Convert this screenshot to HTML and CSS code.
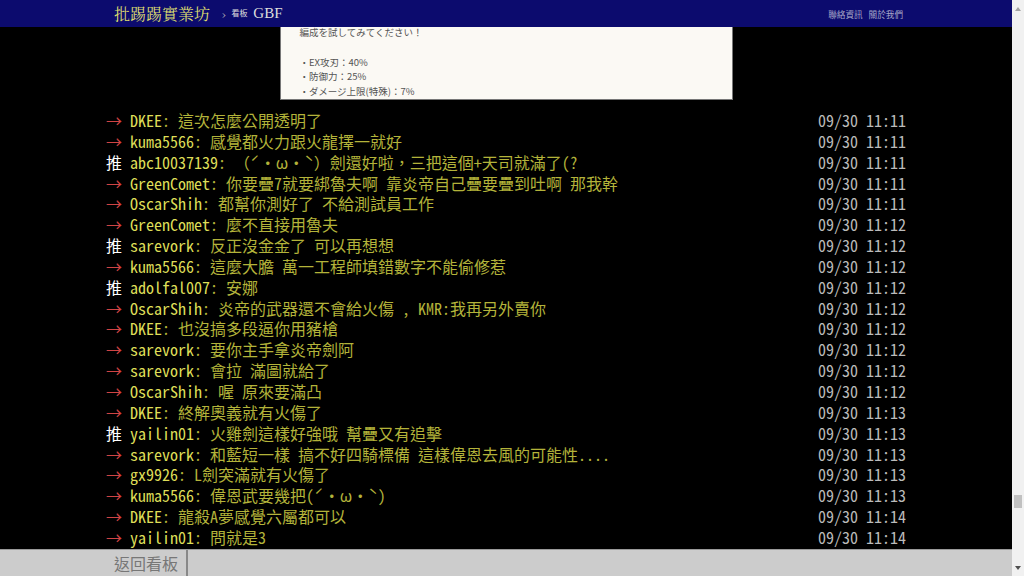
FILE: index.html
```html
<!DOCTYPE html>
<html>
<head>
  <meta charset="utf-8">
  <link rel="stylesheet" href="styles.css">
</head>
<body>
  <div class="page">
    <div id="topbar">
      <div class="bar-inner">
        <a class="logo">批踢踢實業坊</a>
        <span class="sep">&rsaquo;</span>
        <a class="board"><span class="board-label">看板</span> GBF</a>
        <div class="right-links">
          <a>聯絡資訊</a>
          <a>關於我們</a>
        </div>
      </div>
    </div>

    <div id="main">
      <div class="main-inner">
        <div class="richcontent">
          <div class="pic">
            <p>編成を試してみてください！</p>
            <p>&nbsp;</p>
            <p>・EX攻刃：40%</p>
            <p>・防御力：25%</p>
            <p>・ダメージ上限(特殊)：7%</p>
          </div>
        </div>

        <div class="push"><span class="push-tag arrow">→ </span><span class="push-userid">DKEE</span><span class="push-content">: 這次怎麼公開透明了</span><span class="push-ipdatetime">09/30 11:11</span></div>
        <div class="push"><span class="push-tag arrow">→ </span><span class="push-userid">kuma5566</span><span class="push-content">: 感覺都火力跟火龍擇一就好</span><span class="push-ipdatetime">09/30 11:11</span></div>
        <div class="push"><span class="push-tag">推 </span><span class="push-userid">abc10037139</span><span class="push-content">: （ˊ・ω・ˋ）劍還好啦，三把這個+天司就滿了(?</span><span class="push-ipdatetime">09/30 11:11</span></div>
        <div class="push"><span class="push-tag arrow">→ </span><span class="push-userid">GreenComet</span><span class="push-content">: 你要疊7就要綁魯夫啊 靠炎帝自己疊要疊到吐啊 那我幹</span><span class="push-ipdatetime">09/30 11:11</span></div>
        <div class="push"><span class="push-tag arrow">→ </span><span class="push-userid">OscarShih</span><span class="push-content">: 都幫你測好了 不給測試員工作</span><span class="push-ipdatetime">09/30 11:11</span></div>
        <div class="push"><span class="push-tag arrow">→ </span><span class="push-userid">GreenComet</span><span class="push-content">: 麼不直接用魯夫</span><span class="push-ipdatetime">09/30 11:12</span></div>
        <div class="push"><span class="push-tag">推 </span><span class="push-userid">sarevork</span><span class="push-content">: 反正沒金金了 可以再想想</span><span class="push-ipdatetime">09/30 11:12</span></div>
        <div class="push"><span class="push-tag arrow">→ </span><span class="push-userid">kuma5566</span><span class="push-content">: 這麼大膽 萬一工程師填錯數字不能偷修惹</span><span class="push-ipdatetime">09/30 11:12</span></div>
        <div class="push"><span class="push-tag">推 </span><span class="push-userid">adolfal007</span><span class="push-content">: 安娜</span><span class="push-ipdatetime">09/30 11:12</span></div>
        <div class="push"><span class="push-tag arrow">→ </span><span class="push-userid">OscarShih</span><span class="push-content">: 炎帝的武器還不會給火傷 , KMR:我再另外賣你</span><span class="push-ipdatetime">09/30 11:12</span></div>
        <div class="push"><span class="push-tag arrow">→ </span><span class="push-userid">DKEE</span><span class="push-content">: 也沒搞多段逼你用豬槍</span><span class="push-ipdatetime">09/30 11:12</span></div>
        <div class="push"><span class="push-tag arrow">→ </span><span class="push-userid">sarevork</span><span class="push-content">: 要你主手拿炎帝劍阿</span><span class="push-ipdatetime">09/30 11:12</span></div>
        <div class="push"><span class="push-tag arrow">→ </span><span class="push-userid">sarevork</span><span class="push-content">: 會拉 滿圖就給了</span><span class="push-ipdatetime">09/30 11:12</span></div>
        <div class="push"><span class="push-tag arrow">→ </span><span class="push-userid">OscarShih</span><span class="push-content">: 喔 原來要滿凸</span><span class="push-ipdatetime">09/30 11:12</span></div>
        <div class="push"><span class="push-tag arrow">→ </span><span class="push-userid">DKEE</span><span class="push-content">: 終解奧義就有火傷了</span><span class="push-ipdatetime">09/30 11:13</span></div>
        <div class="push"><span class="push-tag">推 </span><span class="push-userid">yailin01</span><span class="push-content">: 火雞劍這樣好強哦 幫疊又有追擊</span><span class="push-ipdatetime">09/30 11:13</span></div>
        <div class="push"><span class="push-tag arrow">→ </span><span class="push-userid">sarevork</span><span class="push-content">: 和藍短一樣 搞不好四騎標備 這樣偉恩去風的可能性....</span><span class="push-ipdatetime">09/30 11:13</span></div>
        <div class="push"><span class="push-tag arrow">→ </span><span class="push-userid">gx9926</span><span class="push-content">: L劍突滿就有火傷了</span><span class="push-ipdatetime">09/30 11:13</span></div>
        <div class="push"><span class="push-tag arrow">→ </span><span class="push-userid">kuma5566</span><span class="push-content">: 偉恩武要幾把(ˊ・ω・ˋ)</span><span class="push-ipdatetime">09/30 11:13</span></div>
        <div class="push"><span class="push-tag arrow">→ </span><span class="push-userid">DKEE</span><span class="push-content">: 龍殺A夢感覺六屬都可以</span><span class="push-ipdatetime">09/30 11:14</span></div>
        <div class="push"><span class="push-tag arrow">→ </span><span class="push-userid">yailin01</span><span class="push-content">: 問就是3</span><span class="push-ipdatetime">09/30 11:14</span></div>
      </div>
    </div>

    <div id="navigation">
      <div class="bar-inner">
        <a class="back-board">返回看板</a>
      </div>
    </div>
  </div>

  <div class="scrollbar">
    <div class="sb-btn"><span class="sb-up"></span></div>
    <div class="sb-track"><div class="sb-thumb"></div></div>
    <div class="sb-btn"><span class="sb-down"></span></div>
  </div>
</body>
</html>
```

FILE: styles.css
```css
html, body {
  margin: 0;
  padding: 0;
  height: 100%;
}
body {
  display: flex;
  background-color: #000;
  color: #bbb;
  font-family: "Noto Serif CJK TC", "Noto Sans CJK TC", serif;
  overflow: hidden;
}
a {
  text-decoration: none;
  color: inherit;
}
p {
  margin: 0;
}
.page {
  flex: 1;
  display: flex;
  flex-direction: column;
  min-width: 0;
}
.bar-inner {
  width: 800px;
  margin: 0 auto;
  box-sizing: border-box;
  display: flex;
  align-items: center;
  height: 100%;
}

/* top bar */
#topbar {
  height: 27px;
  background-color: #0c0b6e;
  flex: none;
}
#topbar .bar-inner {
  padding: 0 3px 0 8px;
}
.logo {
  font-size: 16px;
  color: #dcdc70;
}
.sep {
  font-size: 11px;
  color: #bbb;
  margin: 0 6px 0 12px;
}
.board {
  font-family: "Liberation Serif", "Noto Serif CJK TC", serif;
  font-size: 15px;
  color: #ddd;
}
.board-label {
  font-family: "Noto Sans CJK TC", sans-serif;
  font-size: 8px;
  vertical-align: 2px;
  margin-right: 2px;
}
.right-links {
  margin-left: auto;
  display: flex;
  gap: 6px;
  font-family: "Noto Sans CJK TC", sans-serif;
  font-size: 8.6px;
  color: #a6a6c8;
}

/* main */
#main {
  flex: 1;
  overflow: hidden;
}
.main-inner {
  width: 800px;
  margin: 0 auto;
  font-family: "Noto Sans Mono CJK TC", "Noto Sans CJK TC", "Liberation Mono", monospace;
  font-size: 16px;
  line-height: 20.85px;
}
.richcontent {
  display: flex;
  justify-content: center;
  margin-bottom: 10px;
}
.pic {
  width: 453px;
  height: 73px;
  background-color: #fbf9f4;
  border: 1px solid #777;
  border-top: none;
  padding: 0 19px;
  box-sizing: border-box;
  font-family: "Noto Sans CJK JP", sans-serif;
  font-size: 9.5px;
  line-height: 14.8px;
  color: #555;
  overflow: hidden;
}
.pic p:first-child {
  margin-top: -2px;
}
.push {
  display: flex;
  white-space: pre;
}
.push-tag {
  color: #fff;
}
.push-tag.arrow {
  color: #d04444;
}
.push-userid {
  color: #dede58;
}
.push-content {
  color: #b3b33a;
}
.push-ipdatetime {
  margin-left: auto;
  color: #bbb;
}

/* bottom */
#navigation {
  height: 27px;
  flex: none;
  background-color: #ccc;
  border-top: 1px solid #9a9a9a;
  box-sizing: border-box;
}
.back-board {
  height: 100%;
  display: flex;
  align-items: center;
  padding: 0 8px;
  border-right: 2px solid #888;
  font-family: "Noto Sans CJK TC", sans-serif;
  font-size: 16px;
  color: #777;
}

/* fake browser scrollbar */
.scrollbar {
  width: 12px;
  flex: none;
  display: flex;
  flex-direction: column;
  background-color: #f1f1f1;
}
.sb-btn {
  height: 17px;
  display: flex;
  align-items: center;
  justify-content: center;
}
.sb-up {
  border-left: 3px solid transparent;
  border-right: 3px solid transparent;
  border-bottom: 4px solid #a3a3a3;
}
.sb-down {
  border-left: 3px solid transparent;
  border-right: 3px solid transparent;
  border-top: 4px solid #505050;
}
.sb-track {
  flex: 1;
  padding: 478px 2px 0;
}
.sb-thumb {
  height: 13px;
  background-color: #c1c1c1;
}
```
